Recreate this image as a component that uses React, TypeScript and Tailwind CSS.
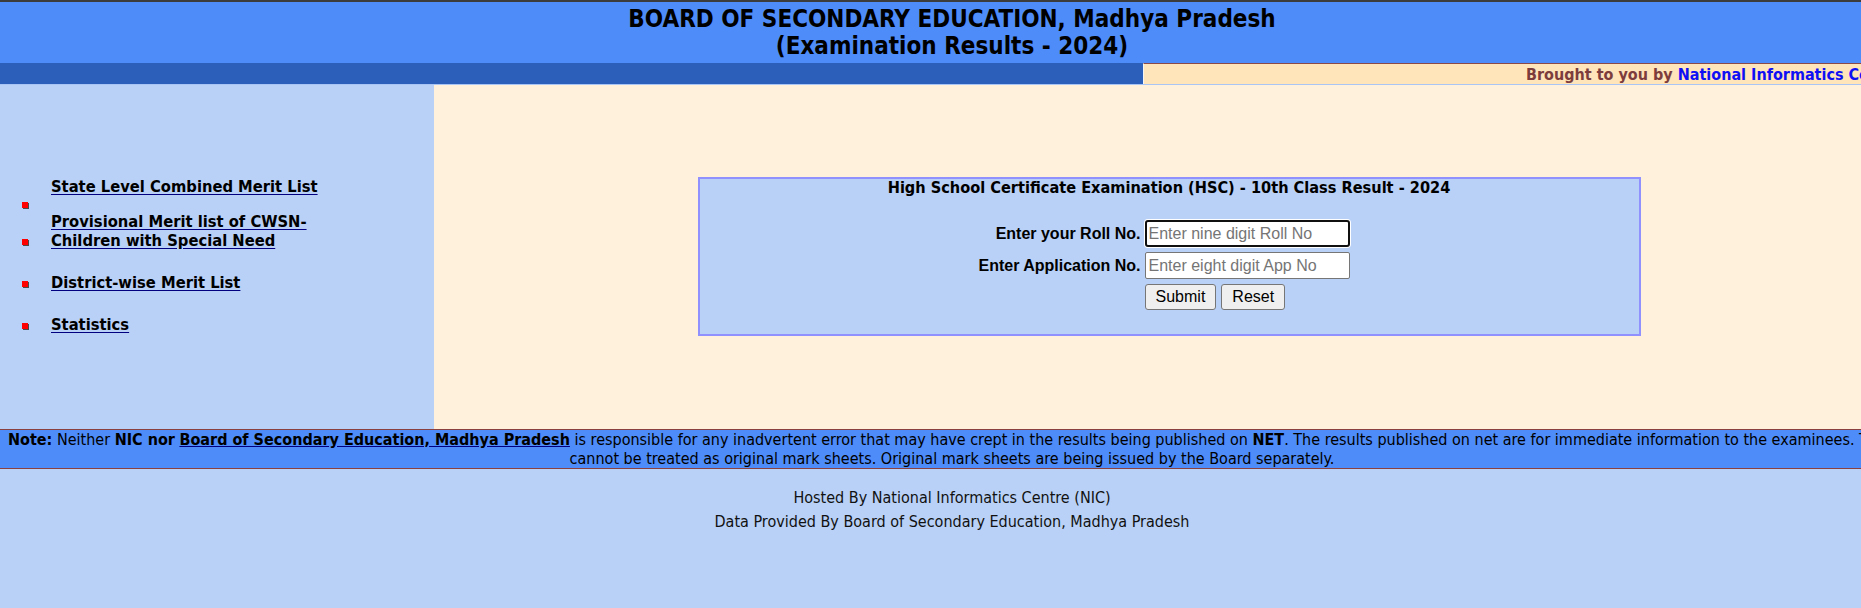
import React from "react";

const TAHOMA = "font-['DejaVu_Sans_Condensed','DejaVu_Sans',sans-serif]";
const ARIAL = "font-['Liberation_Sans',Arial,sans-serif]";

function Bullet({ show }: { show: boolean }) {
  return (
    <div className="w-[51px] shrink-0 flex items-center pl-[22px]">
      {show ? <span className="block w-[6px] h-[6px] bg-[#ff0000] shadow-[1px_1px_0_#4a4a4a]" /> : null}
    </div>
  );
}

function MenuLine({ text, bullet, className }: { text?: string; bullet: boolean; className: string }) {
  return (
    <div className={"flex items-center " + className}>
      <Bullet show={bullet} />
      {text ? (
        <a href="#" className="font-bold text-[16.4px] text-black underline decoration-[#000080] underline-offset-[2px] whitespace-nowrap">
          {text}
        </a>
      ) : null}
    </div>
  );
}

export default function App() {
  return (
    <div className="w-[1861px] h-[608px] overflow-hidden bg-[#b9d1f7]">
      <div className="w-[1904px]">
        {/* Header */}
        <div className={"h-[63px] border-t-2 border-[#3c3c3c] bg-[#4e8cfa] text-center font-bold text-[24px] leading-[27px] pt-[4px] text-black " + TAHOMA}>
          <div>BOARD OF SECONDARY EDUCATION, Madhya Pradesh</div>
          <div>(Examination Results - 2024)</div>
        </div>

        {/* Bar + ticker */}
        <div className="flex h-[22px] border-b border-[#a9c5f5]">
          <div className="w-[1143px] bg-[#2c5fb9]" />
          <div className={"flex-1 bg-[#ffe5b9] border-t border-[#8b4a4a] border-l border-l-[#f4f4f4] overflow-hidden whitespace-nowrap pl-[382px] font-bold text-[16px] leading-[21px] " + TAHOMA}>
            <span className="text-[#7d3d3d]">Brought to you by </span>
            <span className="text-[#1010f5]">National Informatics Centre</span>
          </div>
        </div>

        {/* Body */}
        <div className="flex h-[344px]">
          <div className={"w-[434px] bg-[#b9d1f7] pt-[93px] " + TAHOMA}>
            <MenuLine text="State Level Combined Merit List" bullet={false} className="h-[18px]" />
            <MenuLine bullet={true} className="h-[17px]" />
            <MenuLine text="Provisional Merit list of CWSN-" bullet={false} className="h-[18px]" />
            <MenuLine text="Children with Special Need" bullet={true} className="h-[19px] mt-[1px]" />
            <MenuLine text="District-wise Merit List" bullet={true} className="h-[19px] mt-[23px]" />
            <MenuLine text="Statistics" bullet={true} className="h-[19px] mt-[23px]" />
          </div>
          <div className="flex-1 bg-[#fff1db] pt-[92px]">
            <div className="mx-auto w-[943px] h-[159px] border-2 border-[#9090ff] bg-[#b9d1f7]">
              <div className={"text-center font-bold text-[16.2px] leading-[17px] text-black " + TAHOMA}>
                High School Certificate Examination (HSC) - 10th Class Result - 2024
              </div>
              <div className="flex justify-center mt-[24px] pr-[10px]">
                <div className={"grid grid-cols-[auto_auto] gap-x-[4px] gap-y-[5px] items-center text-[16px] " + ARIAL}>
                  <label className="font-bold text-right text-black">Enter your Roll No.</label>
                  <input
                    className="w-[205px] h-[27px] bg-white border-2 border-[#101010] rounded-[3px] shadow-[0_0_0_1px_#ffffff] px-[2px] text-[16px] outline-none placeholder:text-[#757575]"
                    placeholder="Enter nine digit Roll No"
                  />
                  <label className="font-bold text-right text-black">Enter Application No.</label>
                  <input
                    className="w-[205px] h-[27px] bg-white border border-[#767676] rounded-[2px] px-[3px] text-[16px] outline-none placeholder:text-[#757575]"
                    placeholder="Enter eight digit App No"
                  />
                  <div />
                  <div className="flex gap-[5px]">
                    <button className="h-[26px] px-[10px] bg-[#efefef] border border-[#767676] rounded-[3px] text-[16px] text-black leading-none">
                      Submit
                    </button>
                    <button className="h-[26px] px-[10px] bg-[#efefef] border border-[#767676] rounded-[3px] text-[16px] text-black leading-none">
                      Reset
                    </button>
                  </div>
                </div>
              </div>
            </div>
          </div>
        </div>

        {/* Note */}
        <div className={"h-[40px] border-y border-[#8b4040] bg-[#4e8cfa] text-[16px] leading-[19px] text-black " + TAHOMA}>
          <div className="whitespace-nowrap pl-[8px]">
            <b>Note:</b> Neither <b>NIC nor</b>{" "}
            <b className="underline decoration-[#000080]">Board of Secondary Education, Madhya Pradesh</b> is responsible for
            any inadvertent error that may have crept in the results being published on <b>NET</b>. The results published on
            net are for immediate information to the examinees. These
          </div>
          <div className="text-center">
            cannot be treated as original mark sheets. Original mark sheets are being issued by the Board separately.
          </div>
        </div>

        {/* Footer */}
        <div className={"pt-[17px] text-center text-[16px] leading-[24px] text-[#111111] " + TAHOMA}>
          <div>Hosted By National Informatics Centre (NIC)</div>
          <div>Data Provided By Board of Secondary Education, Madhya Pradesh</div>
        </div>
      </div>
    </div>
  );
}
